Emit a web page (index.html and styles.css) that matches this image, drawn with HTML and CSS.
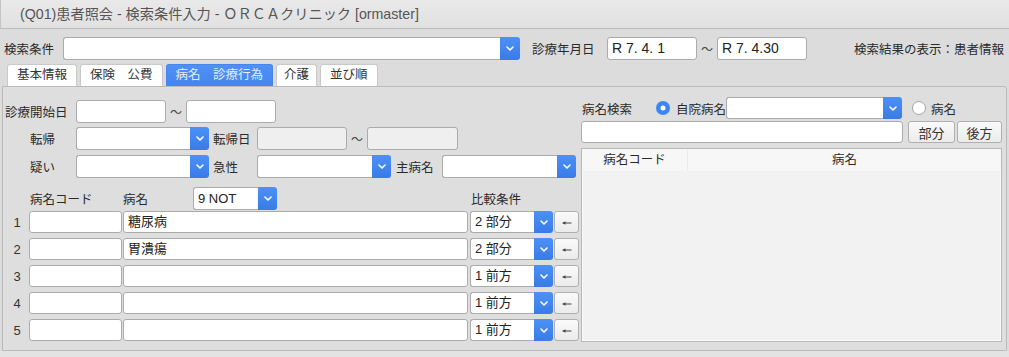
FILE: index.html
```html
<!DOCTYPE html>
<html lang="ja">
<head>
    <meta charset="UTF-8">
    <title>(Q01)患者照会 - 検索条件入力</title>
    <link rel="stylesheet" href="styles.css">
</head>
<body>
    <div class="titlebar">(Q01)患者照会 - 検索条件入力 - ＯＲＣＡクリニック [ormaster]</div>

    <div class="main">
        <div class="toprow">
            <span class="lbl cond-lbl">検索条件</span>
            <div class="combo combo--cond">
                <div class="combo__val"></div>
                <div class="combo__btn"><svg width="8" height="5" viewBox="0 0 8 5"><path d="M1 1 L4 4 L7 1" /></svg></div>
            </div>
            <span class="lbl date-lbl">診療年月日</span>
            <div class="field field--date">R 7. 4. 1</div>
            <span class="tilde">〜</span>
            <div class="field field--date">R 7. 4.30</div>
            <span class="result">検索結果の表示：患者情報</span>
        </div>

        <div class="tabs">
            <div class="tab">基本情報</div>
            <div class="tab">保険　公費</div>
            <div class="tab tab--active">病名　診療行為</div>
            <div class="tab tab--narrow">介護</div>
            <div class="tab">並び順</div>
        </div>

        <div class="panel">
            <div class="leftcol">
                <div class="frow frow--a">
                    <span class="lbl lbl--first">診療開始日</span>
                    <div class="field w90"></div>
                    <span class="tilde">〜</span>
                    <div class="field w90"></div>
                </div>
                <div class="frow frow--b">
                    <span class="lbl lbl--indent">転帰</span>
                    <div class="combo w133">
                        <div class="combo__val"></div>
                        <div class="combo__btn"><svg width="8" height="5" viewBox="0 0 8 5"><path d="M1 1 L4 4 L7 1" /></svg></div>
                    </div>
                    <span class="lbl lbl--mid">転帰日</span>
                    <div class="field field--off w90"></div>
                    <span class="tilde">〜</span>
                    <div class="field field--off w91"></div>
                </div>
                <div class="frow frow--c">
                    <span class="lbl lbl--indent">疑い</span>
                    <div class="combo w133">
                        <div class="combo__val"></div>
                        <div class="combo__btn"><svg width="8" height="5" viewBox="0 0 8 5"><path d="M1 1 L4 4 L7 1" /></svg></div>
                    </div>
                    <span class="lbl lbl--mid">急性</span>
                    <div class="combo w134">
                        <div class="combo__val"></div>
                        <div class="combo__btn"><svg width="8" height="5" viewBox="0 0 8 5"><path d="M1 1 L4 4 L7 1" /></svg></div>
                    </div>
                    <span class="lbl lbl--main">主病名</span>
                    <div class="combo w134">
                        <div class="combo__val"></div>
                        <div class="combo__btn"><svg width="8" height="5" viewBox="0 0 8 5"><path d="M1 1 L4 4 L7 1" /></svg></div>
                    </div>
                </div>

                <div class="drow drow--head">
                    <span class="num"></span>
                    <span class="lbl head-code">病名コード</span>
                    <span class="lbl head-name">病名</span>
                    <div class="combo w84">
                        <div class="combo__val">9 NOT</div>
                        <div class="combo__btn"><svg width="8" height="5" viewBox="0 0 8 5"><path d="M1 1 L4 4 L7 1" /></svg></div>
                    </div>
                    <span class="lbl head-cmp">比較条件</span>
                </div>

                <div class="drow">
                    <span class="num">1</span>
                    <div class="field cell-code"></div>
                    <div class="field cell-name">糖尿病</div>
                    <div class="combo cell-cmp">
                        <div class="combo__val">2 部分</div>
                        <div class="combo__btn"><svg width="8" height="5" viewBox="0 0 8 5"><path d="M1 1 L4 4 L7 1" /></svg></div>
                    </div>
                    <div class="btn btn--arrow"><svg width="10" height="6" viewBox="0 0 10 6"><path d="M0.5 3 H9.5" /><path class="head" d="M0.5 3 L3.5 1.3 V4.7 Z" /></svg></div>
                </div>
                <div class="drow">
                    <span class="num">2</span>
                    <div class="field cell-code"></div>
                    <div class="field cell-name">胃潰瘍</div>
                    <div class="combo cell-cmp">
                        <div class="combo__val">2 部分</div>
                        <div class="combo__btn"><svg width="8" height="5" viewBox="0 0 8 5"><path d="M1 1 L4 4 L7 1" /></svg></div>
                    </div>
                    <div class="btn btn--arrow"><svg width="10" height="6" viewBox="0 0 10 6"><path d="M0.5 3 H9.5" /><path class="head" d="M0.5 3 L3.5 1.3 V4.7 Z" /></svg></div>
                </div>
                <div class="drow">
                    <span class="num">3</span>
                    <div class="field cell-code"></div>
                    <div class="field cell-name"></div>
                    <div class="combo cell-cmp">
                        <div class="combo__val">1 前方</div>
                        <div class="combo__btn"><svg width="8" height="5" viewBox="0 0 8 5"><path d="M1 1 L4 4 L7 1" /></svg></div>
                    </div>
                    <div class="btn btn--arrow"><svg width="10" height="6" viewBox="0 0 10 6"><path d="M0.5 3 H9.5" /><path class="head" d="M0.5 3 L3.5 1.3 V4.7 Z" /></svg></div>
                </div>
                <div class="drow">
                    <span class="num">4</span>
                    <div class="field cell-code"></div>
                    <div class="field cell-name"></div>
                    <div class="combo cell-cmp">
                        <div class="combo__val">1 前方</div>
                        <div class="combo__btn"><svg width="8" height="5" viewBox="0 0 8 5"><path d="M1 1 L4 4 L7 1" /></svg></div>
                    </div>
                    <div class="btn btn--arrow"><svg width="10" height="6" viewBox="0 0 10 6"><path d="M0.5 3 H9.5" /><path class="head" d="M0.5 3 L3.5 1.3 V4.7 Z" /></svg></div>
                </div>
                <div class="drow">
                    <span class="num">5</span>
                    <div class="field cell-code"></div>
                    <div class="field cell-name"></div>
                    <div class="combo cell-cmp">
                        <div class="combo__val">1 前方</div>
                        <div class="combo__btn"><svg width="8" height="5" viewBox="0 0 8 5"><path d="M1 1 L4 4 L7 1" /></svg></div>
                    </div>
                    <div class="btn btn--arrow"><svg width="10" height="6" viewBox="0 0 10 6"><path d="M0.5 3 H9.5" /><path class="head" d="M0.5 3 L3.5 1.3 V4.7 Z" /></svg></div>
                </div>
            </div>

            <div class="rightcol">
                <div class="srow">
                    <span class="lbl search-lbl">病名検索</span>
                    <span class="radio radio--on"></span>
                    <span class="lbl radio-lbl">自院病名</span>
                    <div class="combo w176">
                        <div class="combo__val"></div>
                        <div class="combo__btn"><svg width="8" height="5" viewBox="0 0 8 5"><path d="M1 1 L4 4 L7 1" /></svg></div>
                    </div>
                    <span class="radio radio--off"></span>
                    <span class="lbl radio-lbl">病名</span>
                </div>
                <div class="srow srow--input">
                    <div class="field w322"></div>
                    <div class="btn btn--text btn--part">部分</div>
                    <div class="btn btn--text btn--back">後方</div>
                </div>
                <div class="result-table">
                    <div class="result-table__head">
                        <div class="col-code">病名コード</div>
                        <div class="col-name">病名</div>
                    </div>
                </div>
            </div>
        </div>
    </div>
</body>
</html>
```

FILE: styles.css
```css
* {
    box-sizing: border-box;
}

body {
    margin: 0;
    width: 1009px;
    height: 357px;
    overflow: hidden;
    background: #e3e3e3;
    font-family: "Liberation Sans", "Noto Sans CJK JP", sans-serif;
    font-size: 12.5px;
    color: #2a2a2a;
}

.titlebar {
    height: 29px;
    padding-left: 19px;
    border-left: 1px solid #c4c4c4;
    border-bottom: 1px solid #bdbdbd;
    background: linear-gradient(#e9e9e9, #e1e1e1);
    font-size: 14.2px;
    line-height: 28px;
    color: #555;
    white-space: nowrap;
}

.main {
    padding: 8px 2px 0 2px;
    background: #dcdcdc;
}

/* ---- top row ---- */
.toprow {
    display: flex;
    align-items: center;
    height: 23px;
    padding-left: 2px;
}

.lbl {
    white-space: nowrap;
    flex: none;
}

.cond-lbl { width: 59px; }
.date-lbl { margin-left: 12px; width: 75px; }

.result {
    margin-left: auto;
    margin-right: 3px;
}

.tilde {
    width: 20px;
    flex: none;
    text-align: center;
    font-size: 12px;
    color: #444;
}

/* ---- fields ---- */
.field {
    flex: none;
    height: 23px;
    background: #fff;
    border: 1px solid #ababab;
    border-radius: 3px;
    padding-left: 4px;
    font-size: 13px;
    line-height: 21px;
    color: #222;
    white-space: nowrap;
}

.field--date {
    width: 90px;
    font-size: 14px;
}

.field--off {
    background: #efefef;
}

.w90 { width: 90px; }
.w91 { width: 91px; }
.w322 { width: 322px; height: 22px; line-height: 20px; }

.combo {
    flex: none;
    display: flex;
    height: 23px;
}

.combo__val {
    flex: 1;
    background: #fff;
    border: 1px solid #ababab;
    border-right: none;
    border-radius: 3px 0 0 3px;
    padding-left: 4px;
    font-size: 13px;
    line-height: 21px;
    color: #222;
    white-space: nowrap;
}

.combo__btn {
    width: 19px;
    flex: none;
    display: flex;
    align-items: center;
    justify-content: center;
    background: linear-gradient(#4b91f7, #3a7be6);
    border-radius: 0 3px 3px 0;
}

.combo__btn path {
    fill: none;
    stroke: #fff;
    stroke-width: 1.6;
    stroke-linecap: round;
    stroke-linejoin: round;
}

.combo--cond { width: 457px; }
.combo--cond .combo__btn { width: 20px; }
.w84 { width: 84px; }
.w133 { width: 133px; }
.w134 { width: 134px; }
.w176 { width: 176px; height: 22px; }
.w176 .combo__val { line-height: 20px; }

/* ---- tabs ---- */
.tabs {
    display: flex;
    gap: 3px;
    margin-top: 4px;
    padding-left: 5px;
    height: 22px;
}

.tab {
    padding: 0 9px;
    background: #fff;
    border: 1px solid #c9c9c9;
    border-bottom: none;
    border-radius: 3px 3px 0 0;
    font-size: 12.5px;
    line-height: 21px;
    color: #333;
    white-space: nowrap;
}

.tab--narrow {
    padding: 0 7px;
}

.tab--active {
    background: linear-gradient(#4f91f5, #4485ee);
    border-color: #4485ee;
    color: #e4edfc;
}

/* ---- panel ---- */
.panel {
    display: flex;
    height: 265px;
    background: #dedede;
    border: 1px solid #bababa;
    border-radius: 0 3px 0 0;
    padding-right: 4px;
}

.leftcol {
    width: 578px;
    flex: none;
    padding: 13px 0 0 2px;
}

.frow {
    display: flex;
    align-items: center;
    height: 23px;
}

.frow--b { margin-top: 4px; }
.frow--c { margin-top: 5px; }

.lbl--first { width: 71px; }
.lbl--indent { width: 71px; padding-left: 25px; }
.lbl--mid { width: 48px; padding-left: 4px; }
.lbl--main { width: 51px; padding-left: 5px; }

.drow {
    display: flex;
    align-items: center;
    height: 22px;
    margin-top: 5px;
}

.drow--head {
    height: 23px;
    margin-top: 9px;
    margin-bottom: -4px;
}

.num {
    width: 24px;
    flex: none;
    text-align: center;
    font-size: 13px;
    color: #333;
}

.head-code { width: 94px; padding-left: 1px; }
.head-name { width: 70px; }
.head-cmp { margin-left: 194px; }

.drow .field {
    height: 22px;
    line-height: 20px;
}

.cell-code { width: 93px; }
.cell-name { width: 345px; margin-left: 1px; }
.cell-cmp { width: 83px; height: 22px; margin-left: 2px; }
.cell-cmp .combo__val { line-height: 20px; }

.btn {
    flex: none;
    display: flex;
    align-items: center;
    justify-content: center;
    height: 22px;
    background: linear-gradient(#fafafa, #ebebeb);
    border: 1px solid #b0b0b0;
    border-radius: 3px;
    color: #333;
}

.btn--arrow {
    width: 25px;
    margin-left: 1px;
    padding-top: 2px;
}

.btn--arrow path {
    fill: none;
    stroke: #444;
    stroke-width: 1;
}

.btn--arrow path.head {
    fill: #444;
    stroke: none;
}

.btn--text {
    font-size: 13px;
}

.btn--part { width: 47px; margin-left: 5px; }
.btn--back { width: 45px; margin-left: 2px; }

/* ---- right column ---- */
.rightcol {
    width: 421px;
    flex: none;
    padding-top: 10px;
}

.srow {
    display: flex;
    align-items: center;
    height: 22px;
}

.srow--input { margin-top: 2px; }

.search-lbl { width: 75px; padding-left: 1px; }

.radio {
    width: 14px;
    height: 14px;
    flex: none;
    border-radius: 50%;
}

.radio--on {
    background: #3d86f2;
    box-shadow: inset 0 0 0 4.5px #3d86f2, inset 0 0 0 14px #fff;
}

.radio--off {
    margin-left: 10px;
    background: #fff;
    border: 1px solid #a5a5a5;
}

.radio-lbl { margin-left: 6px; }
.radio--off + .radio-lbl { margin-left: 5px; }

.result-table {
    margin-top: 5px;
    height: 194px;
    background: #f2f2f2;
    border: 1px solid #b8b8b8;
    box-shadow: inset 0 0 0 1px #fafafa;
}

.result-table__head {
    display: flex;
    height: 22px;
    background: #f7f7f7;
    line-height: 22px;
    font-size: 12.5px;
}

.col-code {
    width: 106px;
    text-align: center;
    border-right: 1px solid #ececec;
}

.col-name {
    flex: 1;
    text-align: center;
}
```
